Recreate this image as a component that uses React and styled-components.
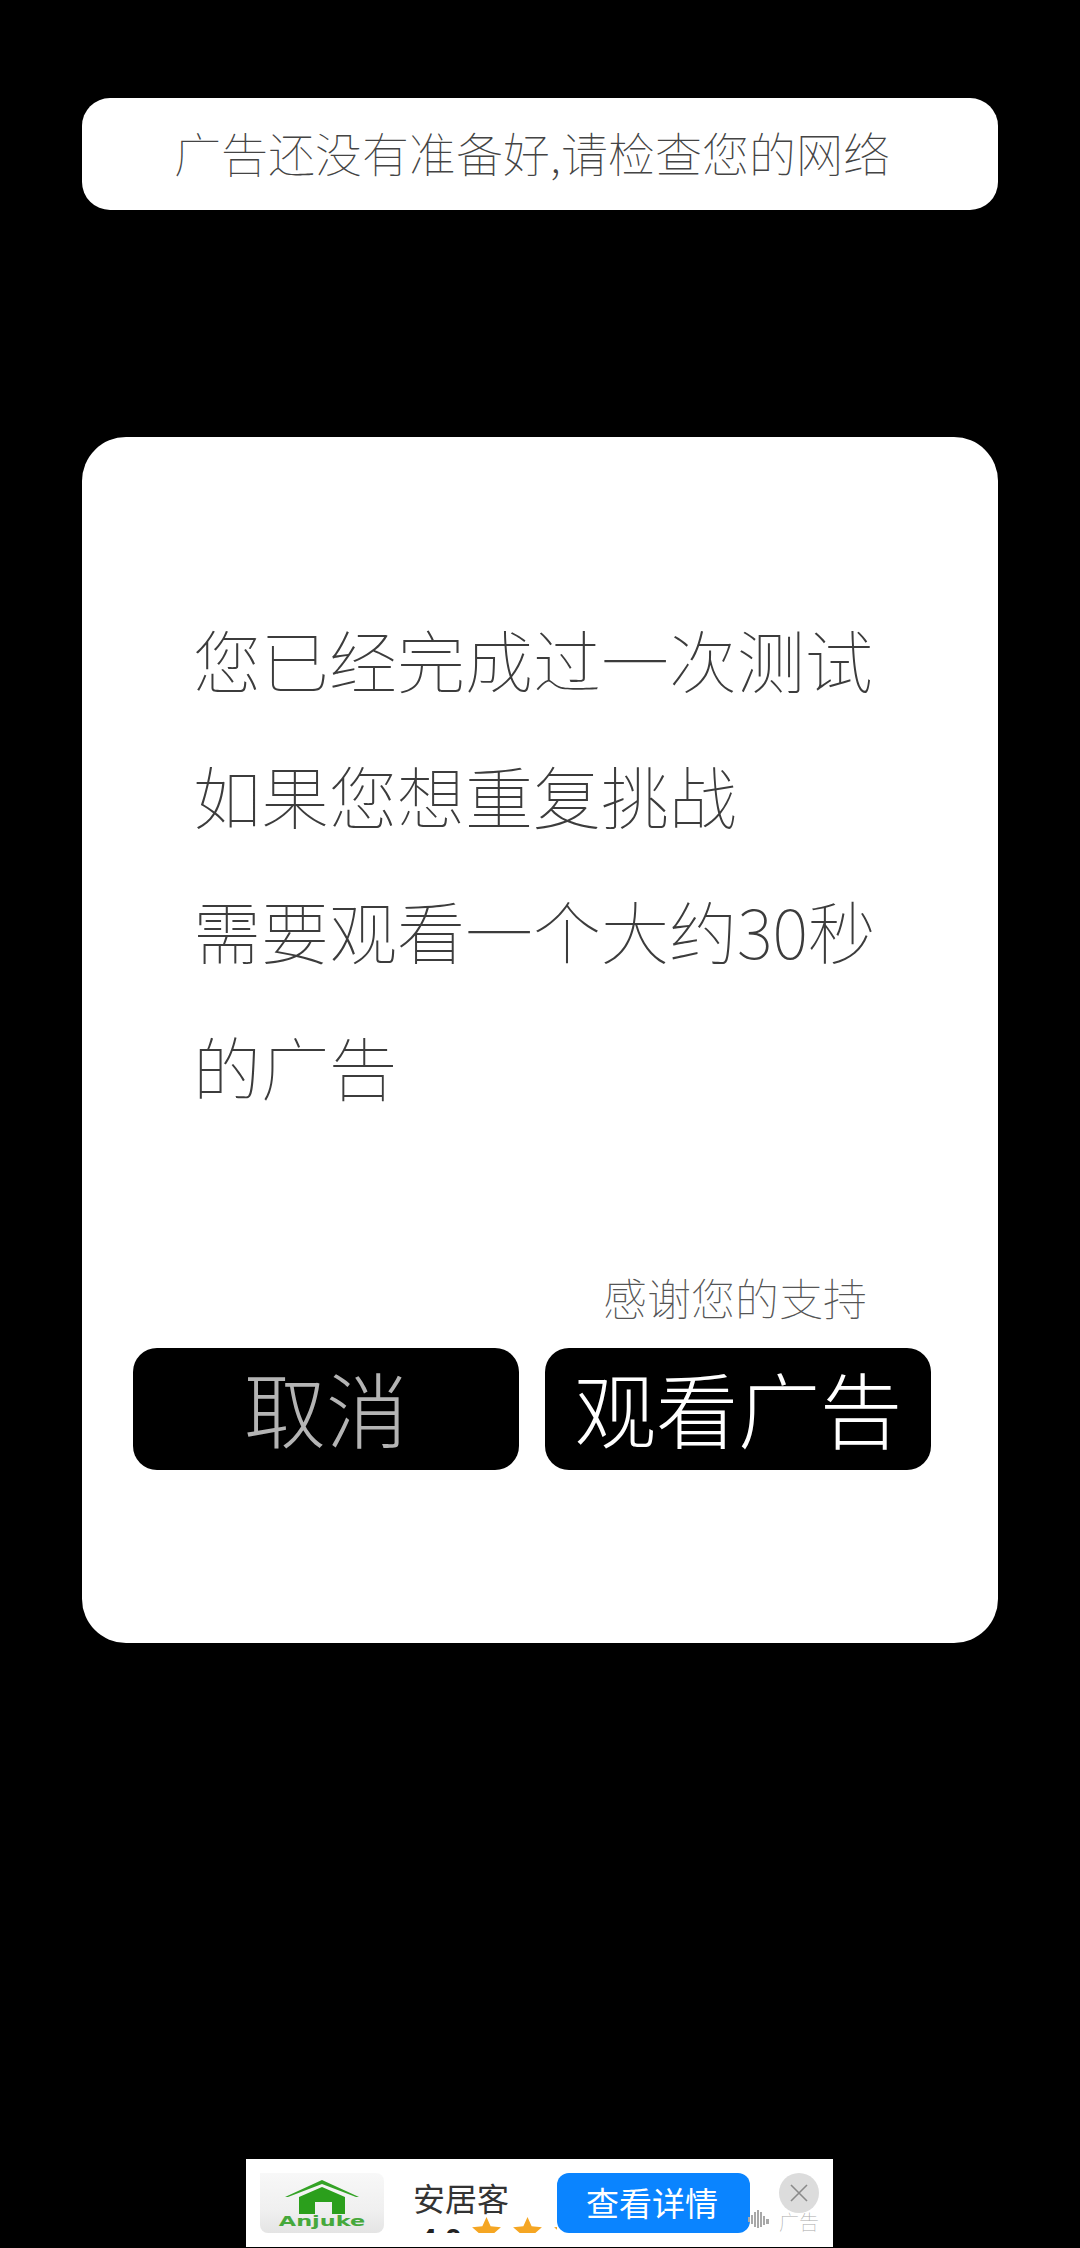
import React from "react";
import styled, { createGlobalStyle } from "styled-components";

const Global = createGlobalStyle`
  html, body { margin: 0; padding: 0; background: #000; }
  * { box-sizing: border-box; }
  body { font-family: "Noto Sans CJK SC", "Noto Sans", sans-serif; }
`;

const Page = styled.div`
  width: 1080px;
  height: 2248px;
  padding: 98px 82px 0;
  display: flex;
  flex-direction: column;
  background: #000;
  overflow: hidden;
`;

const Toast = styled.div`
  height: 112px;
  background: #fff;
  border-radius: 28px;
  display: flex;
  align-items: center;
  justify-content: center;
  font-size: 47px;
  font-weight: 100;
  color: #444;
  line-height: 1;
  padding: 0 16px 5px 0;
`;

const Card = styled.div`
  margin-top: 227px;
  height: 1206px;
  background: #fff;
  border-radius: 44px;
  padding-top: 154px;
  display: flex;
  flex-direction: column;
`;

const Message = styled.div`
  margin-left: 111px;
  width: 690px;
  font-size: 68px;
  font-weight: 100;
  line-height: 135.5px;
  color: #3c3c3c;
`;

const Thanks = styled.div`
  margin-top: 138px;
  height: 52px;
  padding-right: 131px;
  text-align: right;
  font-size: 44px;
  font-weight: 100;
  line-height: 52px;
  color: #555;
`;

const Buttons = styled.div`
  margin-top: 25px;
  display: flex;
  justify-content: center;
  gap: 26px;
  padding-right: 16px;
`;

const Action = styled.div`
  width: 386px;
  height: 122px;
  border-radius: 24px;
  background: #000;
  color: ${(p) => (p.$primary ? "#fff" : "#b4b4b4")};
  display: flex;
  align-items: center;
  justify-content: center;
  font-size: 82px;
  font-weight: 200;
  line-height: 1;
  padding-bottom: 4px;
`;

const Ad = styled.div`
  margin: 516px 0 0 164px;
  align-self: flex-start;
  width: 587px;
  height: 88px;
  background: #fff;
  padding: 14px 14px 0;
  display: flex;
  align-items: flex-start;
`;

const Logo = styled.div`
  width: 124px;
  height: 60px;
  flex: none;
  padding-top: 7px;
  border-radius: 0 8px 8px 8px;
  background: linear-gradient(#f8f8f8, #efefef 65%, #e4e4e4);
  display: flex;
  flex-direction: column;
  align-items: center;
`;

const LogoWord = styled.span`
  font-family: "DejaVu Sans", sans-serif;
  font-weight: 700;
  font-size: 14px;
  line-height: 14px;
  color: #46a83c;
  transform: scaleX(1.6);
`;

const Info = styled.div`
  margin-left: 29px;
  width: 144px;
  height: 60px;
  overflow: hidden;
  flex: none;
`;

const AppName = styled.div`
  font-size: 32px;
  line-height: 30px;
  margin-top: 9px;
  color: #333;
`;

const RatingRow = styled.div`
  display: flex;
  align-items: flex-start;
  margin-top: 5px;
`;

const Score = styled.span`
  margin: 6px 0 0 7px;
  width: 52px;
  flex: none;
  font-family: "Liberation Sans", Arial, sans-serif;
  font-weight: 700;
  font-size: 30px;
  line-height: 32px;
  color: #222;
`;

const Stars = styled.span`
  display: flex;
  gap: 12px;
`;

const CTA = styled.div`
  width: 193px;
  height: 60px;
  flex: none;
  border-radius: 12px;
  background: #0a84ff;
  color: #fff;
  display: flex;
  align-items: center;
  justify-content: center;
  font-size: 33px;
  line-height: 1;
  padding: 0 3px 2px 0;
`;

const Side = styled.div`
  width: 69px;
  flex: none;
  display: flex;
  flex-direction: column;
  align-items: flex-end;
`;

const Close = styled.div`
  width: 40px;
  height: 40px;
  border-radius: 50%;
  background: #dcdcdc;
  display: flex;
  align-items: center;
  justify-content: center;
`;

const AdTag = styled.div`
  margin-top: -3px;
  width: 69px;
  display: flex;
  align-items: center;
  justify-content: space-between;
  font-size: 20px;
  font-weight: 100;
  line-height: 22px;
  color: #aaa;
`;

const WaveBox = styled.svg`
  margin: 0 0 6px -2px;
  flex: none;
`;

const Star = () => (
  <svg width="29" height="27" viewBox="0 0 32 30">
    <path d="M16 0l4.6 10.2L32 11.4l-8.5 7.4L26 30l-10-5.9L6 30l2.5-11.2L0 11.4l11.4-1.2z" fill="#f5a623" />
  </svg>
);

const House = () => (
  <svg width="74" height="34" viewBox="0 0 74 34">
    <path d="M37 0L74 17H71L37 4 3 17H0z" fill="#34a326" />
    <path d="M37 7L60 17V34H47V22H30V34H14V17z" fill="#2b9f1c" />
  </svg>
);

const Wave = () => (
  <WaveBox width="22" height="18" viewBox="0 0 22 18" fill="#a8a8a8">
    <rect x="0" y="7" width="2" height="5" />
    <rect x="3" y="5" width="2" height="9" />
    <rect x="6" y="2" width="2" height="15" />
    <rect x="9" y="0" width="2" height="18" />
    <rect x="12" y="2" width="2" height="15" />
    <rect x="15" y="6" width="2" height="9" />
    <rect x="18" y="9" width="3" height="5" />
  </WaveBox>
);

export default function App() {
  return (
    <>
      <Global />
      <Page>
        <Toast>广告还没有准备好,请检查您的网络</Toast>
        <Card>
          <Message>
            您已经完成过一次测试
            <br />
            如果您想重复挑战
            <br />
            需要观看一个大约30秒的广告
          </Message>
          <Thanks>感谢您的支持</Thanks>
          <Buttons>
            <Action>取消</Action>
            <Action $primary>观看广告</Action>
          </Buttons>
        </Card>
        <Ad>
          <Logo>
            <House />
            <LogoWord>Anjuke</LogoWord>
          </Logo>
          <Info>
            <AppName>安居客</AppName>
            <RatingRow>
              <Score>4.0</Score>
              <Stars>
                <Star />
                <Star />
                <Star />
              </Stars>
            </RatingRow>
          </Info>
          <CTA>查看详情</CTA>
          <Side>
            <Close>
              <svg width="20" height="20" viewBox="0 0 20 20" stroke="#8a8a8a" strokeWidth="1.6" fill="none">
                <path d="M2 2l16 16M18 2L2 18" />
              </svg>
            </Close>
            <AdTag>
              <Wave />
              <span>广告</span>
            </AdTag>
          </Side>
        </Ad>
      </Page>
    </>
  );
}
